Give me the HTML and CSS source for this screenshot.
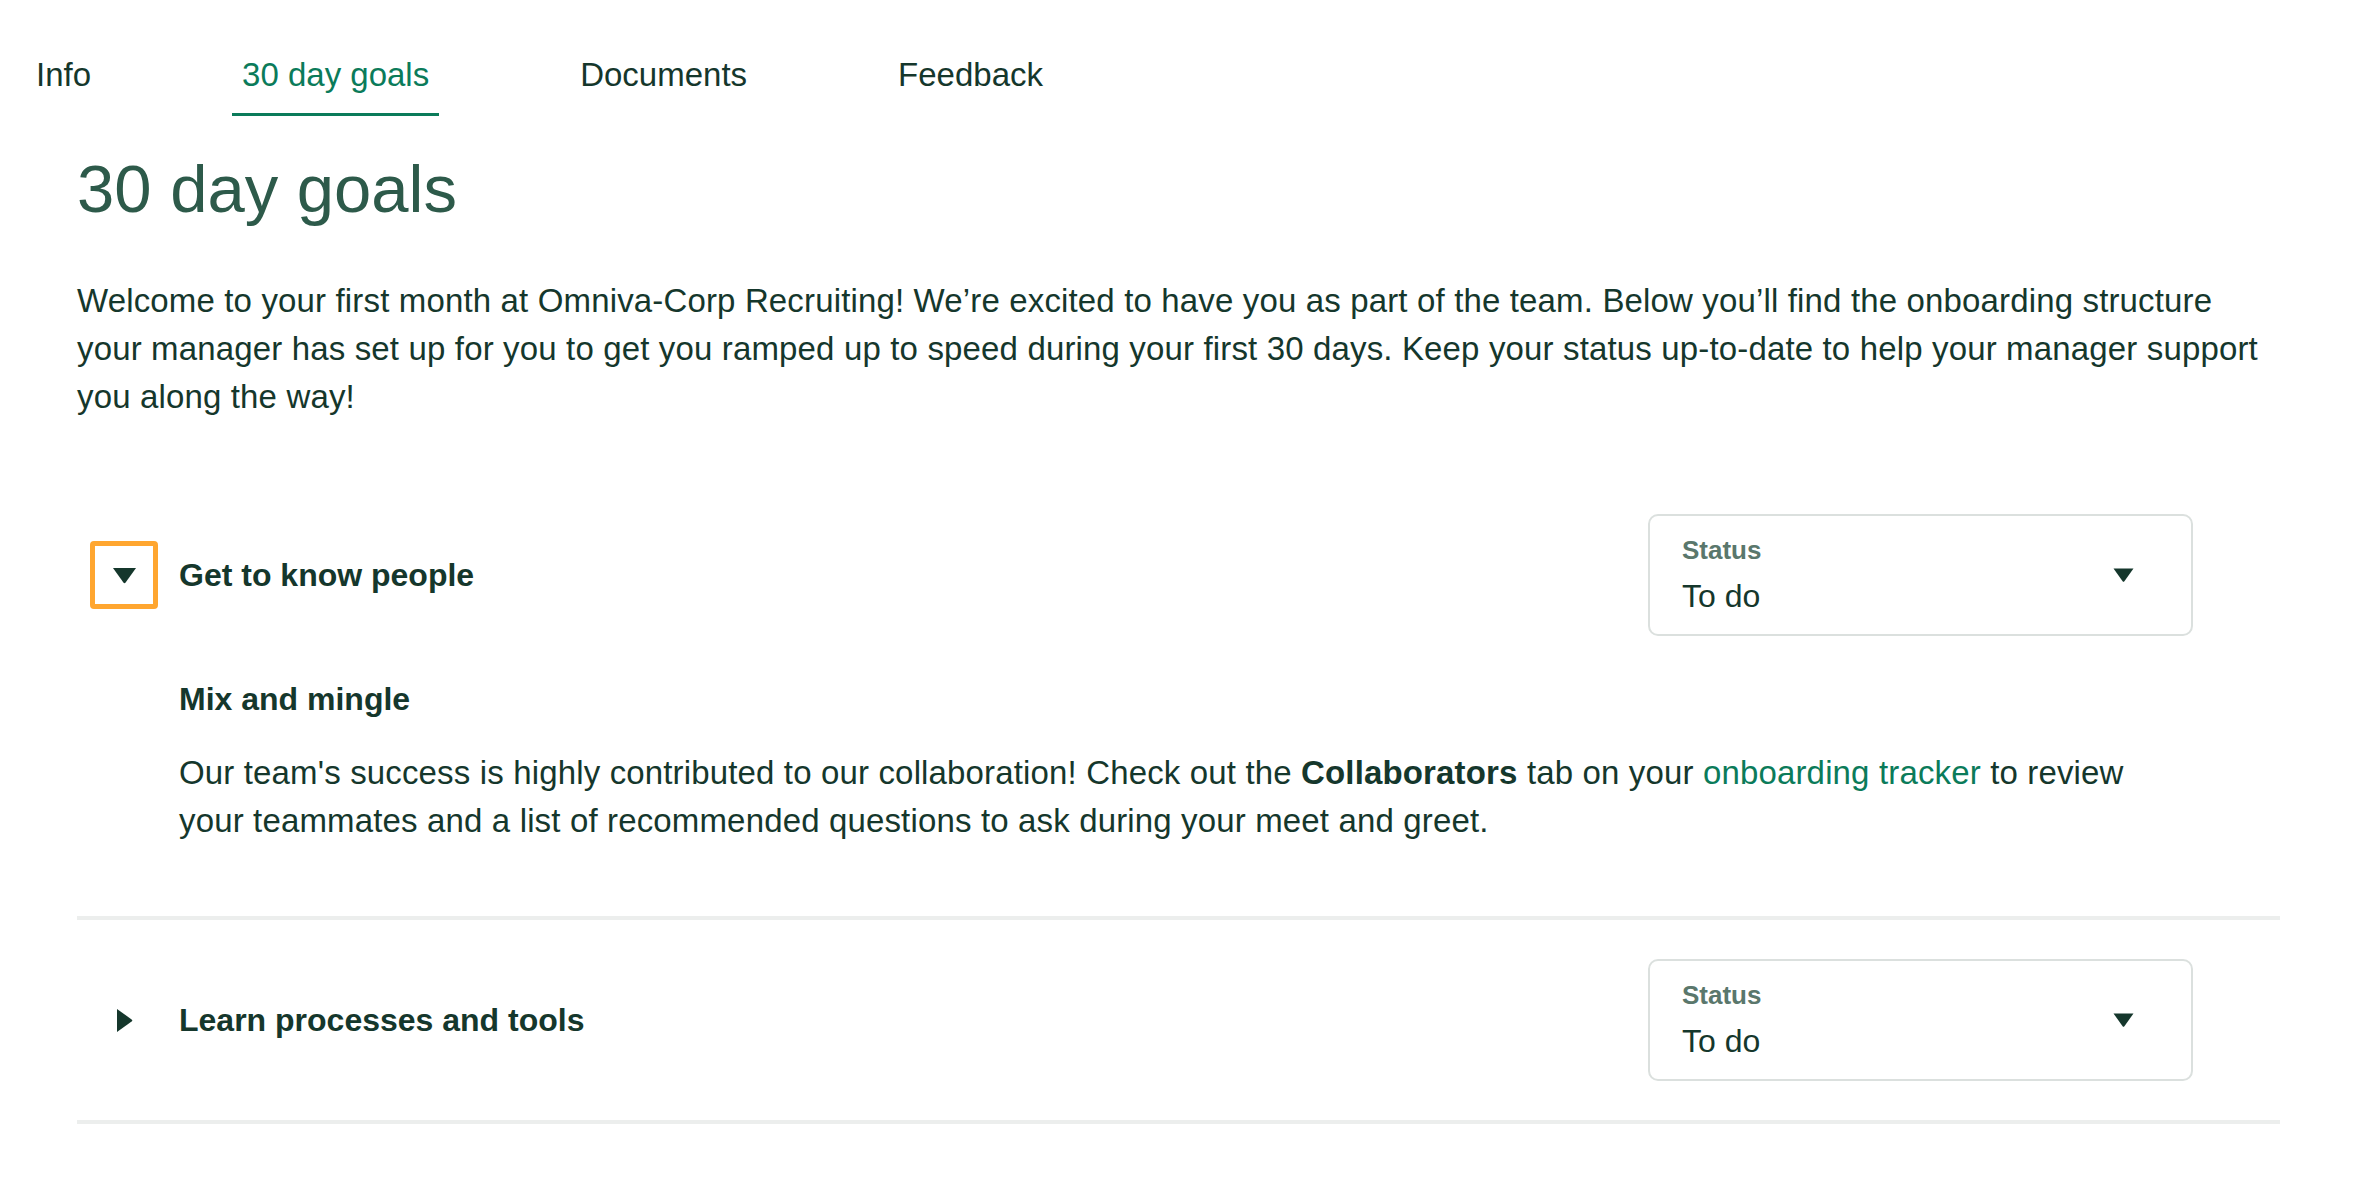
FILE: index.html
```html
<!DOCTYPE html>
<html lang="en">
<head>
  <meta charset="UTF-8">
  <meta name="viewport" content="width=device-width, initial-scale=1.0">
  <title>30 day goals</title>
  <link rel="stylesheet" href="styles.css">
</head>
<body>
  <nav class="tabs">
    <a class="tab" href="#">Info</a>
    <a class="tab active" href="#">30 day goals</a>
    <a class="tab" href="#">Documents</a>
    <a class="tab" href="#">Feedback</a>
  </nav>

  <main class="container">
    <h1>30 day goals</h1>
    <p class="intro">Welcome to your first month at Omniva-Corp Recruiting! We’re excited to have you as part of the team. Below you’ll find the onboarding structure your manager has set up for you to get you ramped up to speed during your first 30 days. Keep your status up-to-date to help your manager support you along the way!</p>

    <div class="goal-list">
      <!-- Expanded goal -->
      <section class="goal">
        <div class="goal-header">
          <button class="toggle focused" aria-expanded="true" aria-label="Collapse">
            <svg width="25" height="17" viewBox="0 0 25 17"><path d="M1 1 H24 L13.6 15.6 Q12.5 17 11.4 15.6 Z" fill="currentColor"/></svg>
          </button>
          <h2 class="goal-title">Get to know people</h2>
          <div class="status-select">
            <div>
              <div class="status-label">Status</div>
              <div class="status-value">To do</div>
            </div>
            <svg class="caret" width="21" height="14" viewBox="0 0 21 14"><path d="M0.5 0.5 H20.5 L11.4 13.2 Q10.5 14.3 9.6 13.2 Z" fill="currentColor"/></svg>
          </div>
        </div>
        <div class="goal-body">
          <h3>Mix and mingle</h3>
          <p>Our team's success is highly contributed to our collaboration! Check out the <strong>Collaborators</strong> tab on your <a href="#">onboarding tracker</a> to review your teammates and a list of recommended questions to ask during your meet and greet.</p>
        </div>
      </section>

      <!-- Collapsed goal -->
      <section class="goal">
        <div class="goal-header">
          <button class="toggle" aria-expanded="false" aria-label="Expand">
            <svg width="17" height="25" viewBox="0 0 17 25"><path d="M1 1 V24 L15.6 13.6 Q17 12.5 15.6 11.4 Z" fill="currentColor"/></svg>
          </button>
          <h2 class="goal-title">Learn processes and tools</h2>
          <div class="status-select">
            <div>
              <div class="status-label">Status</div>
              <div class="status-value">To do</div>
            </div>
            <svg class="caret" width="21" height="14" viewBox="0 0 21 14"><path d="M0.5 0.5 H20.5 L11.4 13.2 Q10.5 14.3 9.6 13.2 Z" fill="currentColor"/></svg>
          </div>
        </div>
      </section>
    </div>
  </main>
</body>
</html>
```

FILE: styles.css
```css
:root {
  --text-color: #15372c;
  --heading-color: #2d5a4a;
  --muted-color: #5a776c;
  --green: #0b7b5a;
  --focus-color: #ffa62f;
  --border-color: #dbe0de;
  --divider-color: #eceeed;
}

body {
  font-family: 'Liberation Sans', Arial, sans-serif;
  color: var(--text-color);
  background-color: #ffffff;
  margin: 0;
}

/* Tabs */
.tabs {
  display: flex;
  gap: 131px;
  padding: 55px 0 0 26px;
}

.tab {
  padding: 0 10px 18px;
  font-size: 33px;
  line-height: 40px;
  color: var(--text-color);
  text-decoration: none;
  border-bottom: 3px solid transparent;
}

.tab.active {
  color: var(--green);
  border-bottom-color: var(--green);
}

.container {
  padding: 0 74px 0 77px;
}

h1 {
  font-size: 67px;
  line-height: 82px;
  font-weight: normal;
  color: var(--heading-color);
  margin: 32px 0 0;
}

.intro {
  font-size: 33px;
  line-height: 48px;
  letter-spacing: 0.15px;
  margin: 47px 0 0;
}

/* Goals */
.goal-list {
  margin-top: 54px;
}

.goal {
  border-bottom: 4px solid var(--divider-color);
}

.goal-header {
  display: flex;
  align-items: center;
  padding: 39px 87px 39px 13px;
}

.toggle {
  width: 68px;
  height: 68px;
  display: flex;
  align-items: center;
  justify-content: center;
  padding: 0;
  background: none;
  border: 5px solid transparent;
  border-radius: 4px;
  color: var(--text-color);
  cursor: pointer;
}

.toggle.focused {
  border-color: var(--focus-color);
}

.goal-title {
  flex: 1;
  margin: 0 0 0 21px;
  font-size: 32px;
  line-height: 48px;
  font-weight: bold;
}

.status-select {
  width: 545px;
  box-sizing: border-box;
  display: flex;
  align-items: center;
  justify-content: space-between;
  padding: 18px 57px 18px 32px;
  border: 2px solid var(--border-color);
  border-radius: 10px;
}

.status-label {
  font-size: 26px;
  line-height: 32px;
  font-weight: bold;
  color: var(--muted-color);
  margin-bottom: 10px;
}

.status-value {
  font-size: 32px;
  line-height: 40px;
}

.caret {
  color: var(--text-color);
}

.goal-body {
  padding: 0 130px 71px 102px;
}

.goal-body h3 {
  font-size: 32px;
  line-height: 48px;
  margin: 0 0 26px;
}

.goal-body p {
  font-size: 33px;
  line-height: 48px;
  letter-spacing: 0.15px;
  margin: 0;
}

.goal-body a {
  color: var(--green);
  text-decoration: none;
}
```
